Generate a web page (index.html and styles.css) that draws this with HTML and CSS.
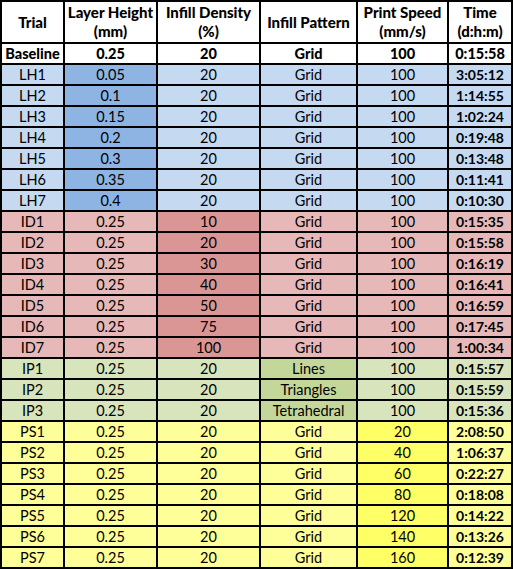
FILE: index.html
```html
<!DOCTYPE html>
<html>
<head>
<meta charset="utf-8">
<link rel="stylesheet" href="styles.css">
</head>
<body>
<div class="sheet">
  <div class="c h">Trial</div>
  <div class="c h">Layer Height<br>(mm)</div>
  <div class="c h">Infill Density<br>(%)</div>
  <div class="c h">Infill Pattern</div>
  <div class="c h">Print Speed<br>(mm/s)</div>
  <div class="c h">Time<br>(d:h:m)</div>

  <div class="c b">Baseline</div><div class="c b">0.25</div><div class="c b">20</div><div class="c b">Grid</div><div class="c b">100</div><div class="c b">0:15:58</div>

  <div class="c lh">LH1</div><div class="c lh-d">0.05</div><div class="c lh">20</div><div class="c lh">Grid</div><div class="c lh">100</div><div class="c lh t">3:05:12</div>
  <div class="c lh">LH2</div><div class="c lh-d">0.1</div><div class="c lh">20</div><div class="c lh">Grid</div><div class="c lh">100</div><div class="c lh t">1:14:55</div>
  <div class="c lh">LH3</div><div class="c lh-d">0.15</div><div class="c lh">20</div><div class="c lh">Grid</div><div class="c lh">100</div><div class="c lh t">1:02:24</div>
  <div class="c lh">LH4</div><div class="c lh-d">0.2</div><div class="c lh">20</div><div class="c lh">Grid</div><div class="c lh">100</div><div class="c lh t">0:19:48</div>
  <div class="c lh">LH5</div><div class="c lh-d">0.3</div><div class="c lh">20</div><div class="c lh">Grid</div><div class="c lh">100</div><div class="c lh t">0:13:48</div>
  <div class="c lh">LH6</div><div class="c lh-d">0.35</div><div class="c lh">20</div><div class="c lh">Grid</div><div class="c lh">100</div><div class="c lh t">0:11:41</div>
  <div class="c lh">LH7</div><div class="c lh-d">0.4</div><div class="c lh">20</div><div class="c lh">Grid</div><div class="c lh">100</div><div class="c lh t">0:10:30</div>

  <div class="c id">ID1</div><div class="c id">0.25</div><div class="c id-d">10</div><div class="c id">Grid</div><div class="c id">100</div><div class="c id t">0:15:35</div>
  <div class="c id">ID2</div><div class="c id">0.25</div><div class="c id-d">20</div><div class="c id">Grid</div><div class="c id">100</div><div class="c id t">0:15:58</div>
  <div class="c id">ID3</div><div class="c id">0.25</div><div class="c id-d">30</div><div class="c id">Grid</div><div class="c id">100</div><div class="c id t">0:16:19</div>
  <div class="c id">ID4</div><div class="c id">0.25</div><div class="c id-d">40</div><div class="c id">Grid</div><div class="c id">100</div><div class="c id t">0:16:41</div>
  <div class="c id">ID5</div><div class="c id">0.25</div><div class="c id-d">50</div><div class="c id">Grid</div><div class="c id">100</div><div class="c id t">0:16:59</div>
  <div class="c id">ID6</div><div class="c id">0.25</div><div class="c id-d">75</div><div class="c id">Grid</div><div class="c id">100</div><div class="c id t">0:17:45</div>
  <div class="c id">ID7</div><div class="c id">0.25</div><div class="c id-d">100</div><div class="c id">Grid</div><div class="c id">100</div><div class="c id t">1:00:34</div>

  <div class="c ip">IP1</div><div class="c ip">0.25</div><div class="c ip">20</div><div class="c ip-d">Lines</div><div class="c ip">100</div><div class="c ip t">0:15:57</div>
  <div class="c ip">IP2</div><div class="c ip">0.25</div><div class="c ip">20</div><div class="c ip-d">Triangles</div><div class="c ip">100</div><div class="c ip t">0:15:59</div>
  <div class="c ip">IP3</div><div class="c ip">0.25</div><div class="c ip">20</div><div class="c ip-d">Tetrahedral</div><div class="c ip">100</div><div class="c ip t">0:15:36</div>

  <div class="c ps">PS1</div><div class="c ps">0.25</div><div class="c ps">20</div><div class="c ps">Grid</div><div class="c ps-d">20</div><div class="c ps t">2:08:50</div>
  <div class="c ps">PS2</div><div class="c ps">0.25</div><div class="c ps">20</div><div class="c ps">Grid</div><div class="c ps-d">40</div><div class="c ps t">1:06:37</div>
  <div class="c ps">PS3</div><div class="c ps">0.25</div><div class="c ps">20</div><div class="c ps">Grid</div><div class="c ps-d">60</div><div class="c ps t">0:22:27</div>
  <div class="c ps">PS4</div><div class="c ps">0.25</div><div class="c ps">20</div><div class="c ps">Grid</div><div class="c ps-d">80</div><div class="c ps t">0:18:08</div>
  <div class="c ps">PS5</div><div class="c ps">0.25</div><div class="c ps">20</div><div class="c ps">Grid</div><div class="c ps-d">120</div><div class="c ps t">0:14:22</div>
  <div class="c ps">PS6</div><div class="c ps">0.25</div><div class="c ps">20</div><div class="c ps">Grid</div><div class="c ps-d">140</div><div class="c ps t">0:13:26</div>
  <div class="c ps">PS7</div><div class="c ps">0.25</div><div class="c ps">20</div><div class="c ps">Grid</div><div class="c ps-d">160</div><div class="c ps t">0:12:39</div>
</div>
</body>
</html>
```
FILE: styles.css
```css
html, body {
  margin: 0;
  padding: 0;
  background: #ffffff;
}
.sheet {
  display: grid;
  grid-template-columns: 61px 91px 101px 95px 89px 62px;
  grid-template-rows: 40px repeat(25, 19px);
  gap: 2px;
  padding: 2px;
  width: 513px;
  box-sizing: border-box;
  background: #000000;
  font-family: Lato, "Liberation Sans", sans-serif;
  font-size: 14.5px;
  color: #000000;
}
.c {
  display: flex;
  align-items: center;
  justify-content: center;
  text-align: center;
  line-height: 19px;
  white-space: nowrap;
  background: #ffffff;
}
.h {
  font-weight: 900;
  font-size: 15px;
  line-height: 19px;
}
.b {
  font-weight: 900;
}
.t {
  font-weight: 700;
  font-size: 14px;
}
.lh { background: #c5d9f1; }
.lh-d { background: #8db4e2; }
.id { background: #e6b8b7; }
.id-d { background: #da9694; }
.ip { background: #d8e4bc; }
.ip-d { background: #c4d79b; }
.ps { background: #ffff99; }
.ps-d { background: #ffff66; }
```
